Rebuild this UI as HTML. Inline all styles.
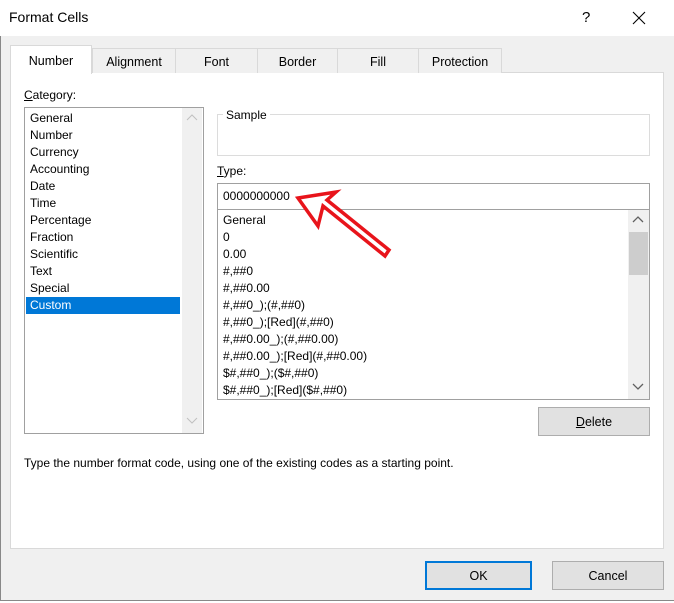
<!DOCTYPE html>
<html><head><style>
*{margin:0;padding:0;box-sizing:border-box}
body{width:674px;height:603px;background:#f0f0f0;font-family:"Liberation Sans",sans-serif;font-size:12px;color:#000;position:relative;overflow:hidden}
.a{position:absolute}
.title{left:0;top:0;width:674px;height:36px;background:#fff}
.tab{position:absolute;top:48px;height:25px;border:1px solid #d9d9d9;border-bottom:none;background:#f0f0f0;text-align:center;line-height:26px;font-size:12.5px}
.list div{height:17px;line-height:17px;padding-left:4px;white-space:nowrap}
.btn{position:absolute;background:#e1e1e1;border:1px solid #adadad;text-align:center;font-size:12.5px}
u{text-decoration:underline}
</style></head><body>
<div class="a" style="left:0;top:0;width:1px;height:603px;background:#888"></div>
<div class="a title"></div>
<div class="a" style="left:9px;top:9px;font-size:14px">Format Cells</div>
<div class="a" style="left:582px;top:9px;font-size:15px">?</div>
<svg class="a" style="left:632px;top:11px" width="14" height="14"><path d="M1 1L13 13M13 1L1 13" stroke="#000" stroke-width="1.1"/></svg>
<div class="a" style="left:10px;top:72px;width:654px;height:477px;background:#fff;border:1px solid #d9d9d9"></div>
<div class="tab" style="left:10px;top:45px;width:82px;height:29px;background:#fff;border-color:#d9d9d9;line-height:30px;z-index:2">Number</div>
<div class="tab" style="left:92px;width:84px">Alignment</div>
<div class="tab" style="left:175px;width:83px">Font</div>
<div class="tab" style="left:257px;width:81px">Border</div>
<div class="tab" style="left:337px;width:82px">Fill</div>
<div class="tab" style="left:418px;width:84px">Protection</div>
<div class="a" style="left:24px;top:88px"><u>C</u>ategory:</div>
<div class="a list" style="left:24px;top:107px;width:180px;height:327px;border:1px solid #a0a0a0;background:#fff;padding-top:2px;padding-left:1px">
<div>General</div><div>Number</div><div>Currency</div><div>Accounting</div><div>Date</div><div>Time</div><div>Percentage</div><div>Fraction</div><div>Scientific</div><div>Text</div><div>Special</div><div style="background:#0078d7;color:#fff;width:154px">Custom</div>
</div>
<div class="a" style="left:182px;top:108px;width:20px;height:325px;background:#f0f0f0"></div>
<svg class="a" style="left:186px;top:113px" width="12" height="8"><path d="M1 7L6 2L11 7" stroke="#c0c0c0" fill="none"/></svg>
<svg class="a" style="left:186px;top:417px" width="12" height="8"><path d="M1 1L6 6L11 1" stroke="#c0c0c0" fill="none"/></svg>
<div class="a" style="left:217px;top:114px;width:433px;height:42px;border:1px solid #dcdcdc"></div>
<div class="a" style="left:223px;top:108px;background:#fff;padding:0 3px">Sample</div>
<div class="a" style="left:217px;top:164px"><u>T</u>ype:</div>
<div class="a" style="left:217px;top:183px;width:433px;height:27px;border:1px solid #a0a0a0;background:#fff;padding:5px 0 0 5px">0000000000</div>
<div class="a list" style="left:217px;top:209px;width:433px;height:191px;border:1px solid #a0a0a0;background:#fff;padding-top:2px;padding-left:1px;overflow:hidden">
<div>General</div><div>0</div><div>0.00</div><div>#,##0</div><div>#,##0.00</div><div>#,##0_);(#,##0)</div><div>#,##0_);[Red](#,##0)</div><div>#,##0.00_);(#,##0.00)</div><div>#,##0.00_);[Red](#,##0.00)</div><div>$#,##0_);($#,##0)</div><div>$#,##0_);[Red]($#,##0)</div>
</div>
<div class="a" style="left:628px;top:210px;width:21px;height:189px;background:#f0f0f0"></div>
<div class="a" style="left:629px;top:232px;width:19px;height:43px;background:#cdcdcd"></div>
<svg class="a" style="left:632px;top:215px" width="12" height="8"><path d="M1 7L6 2L11 7" stroke="#606060" fill="none" stroke-width="1.3"/></svg>
<svg class="a" style="left:632px;top:383px" width="12" height="8"><path d="M1 1L6 6L11 1" stroke="#606060" fill="none" stroke-width="1.3"/></svg>
<svg class="a" style="left:290px;top:188px" width="110" height="80"><path d="M8 10L46 4L37 12L99 62L95 68L33 18L28 38Z" fill="#fff" stroke="#e8141b" stroke-width="3.5" stroke-linejoin="miter"/></svg>
<div class="btn" style="left:538px;top:407px;width:112px;height:29px;line-height:29px"><u>D</u>elete</div>
<div class="a" style="left:24px;top:456px">Type the number format code, using one of the existing codes as a starting point.</div>
<div class="btn" style="left:425px;top:561px;width:107px;height:29px;line-height:27px;border:2px solid #0078d7">OK</div>
<div class="btn" style="left:552px;top:561px;width:112px;height:29px;line-height:29px">Cancel</div>
<div class="a" style="left:0;top:600px;width:674px;height:1px;background:#888"></div>
<div class="a" style="left:0;top:601px;width:674px;height:2px;background:#fff"></div>
</body></html>
